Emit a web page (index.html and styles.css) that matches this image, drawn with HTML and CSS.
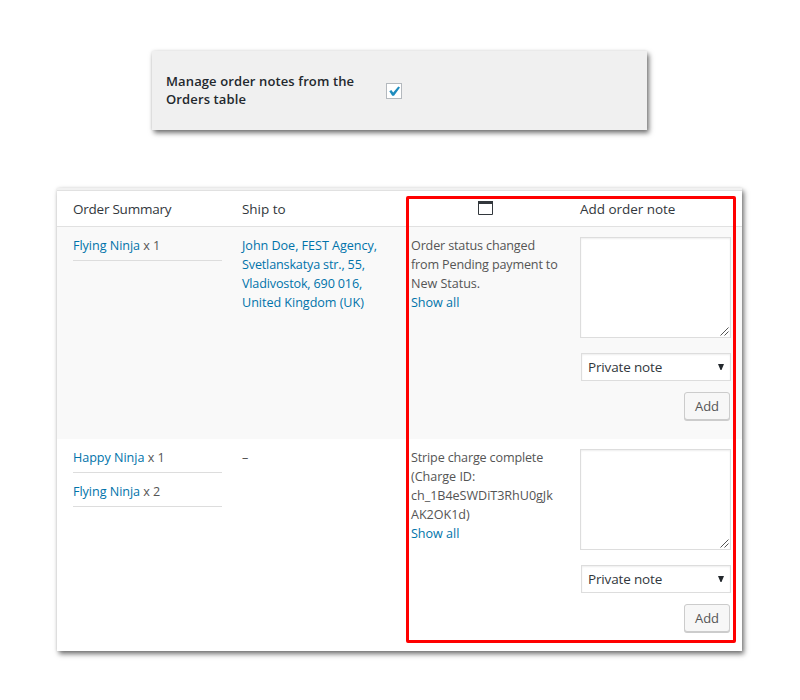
FILE: index.html
```html
<!DOCTYPE html>
<html lang="en">
<head>
<meta charset="utf-8">
<title>Order notes</title>
<link rel="stylesheet" href="styles.css">
</head>
<body>
<section class="option">
  <div class="option-label">Manage order notes from the<br>Orders table</div>
  <span class="check"><svg width="14" height="14" viewBox="0 0 14 14"><path d="M2.300 7.200 4.300 6 6.200 8.400 11.300 2.500 13 3.500 7 11.700 5.200 11.700Z" fill="#1e8cbe"/></svg></span>
</section>

<section class="orders">
  <div class="row head">
    <div class="cell tight">Order Summary</div>
    <div class="cell">Ship to</div>
    <div class="cell icon-cell"><svg width="15" height="14" viewBox="0 0 15 14"><path d="M.5 0V13.500H14.500V0" fill="#fff" stroke="#32373c"/><path d="M0 0H15V3H0Z" fill="#32373c"/></svg></div>
    <div class="cell">Add order note</div>
  </div>
  <div class="row odd">
    <div class="cell">
      <div class="item"><a>Flying Ninja</a> x 1</div>
    </div>
    <div class="cell"><a>John Doe, FEST Agency,<br><span class="tight">Svetlanskatya str., 55,</span><br><span class="tight">Vladivostok, 690 016,</span><br>United Kingdom (UK)</a></div>
    <div class="cell"><span class="tight">Order status changed</span><br><span class="tight">from Pending payment to</span><br>New Status.<br><a>Show all</a></div>
    <div class="cell form">
      <div class="textarea"><svg width="9" height="9" viewBox="0 0 9 9"><path d="M.5 8.500 8.500.5M4.500 8.500 8.500 4.500" stroke="#555" fill="none"/></svg></div>
      <div class="select"><span>Private note</span><svg width="6" height="6" viewBox="0 0 6 6"><path d="M0 0H6L3.500 6H2.500Z" fill="#23282d"/></svg></div>
      <div class="button">Add</div>
    </div>
  </div>
  <div class="row">
    <div class="cell">
      <div class="item"><a>Happy Ninja</a> x 1</div>
      <div class="item"><a>Flying Ninja</a> x 2</div>
    </div>
    <div class="cell">–</div>
    <div class="cell"><span class="tight">Stripe charge complete</span><br>(Charge ID:<br>ch_1B4eSWDiT3RhU0gJk<br>AK2OK1d)<br><a>Show all</a></div>
    <div class="cell form">
      <div class="textarea"><svg width="9" height="9" viewBox="0 0 9 9"><path d="M.5 8.500 8.500.5M4.500 8.500 8.500 4.500" stroke="#555" fill="none"/></svg></div>
      <div class="select"><span>Private note</span><svg width="6" height="6" viewBox="0 0 6 6"><path d="M0 0H6L3.500 6H2.500Z" fill="#23282d"/></svg></div>
      <div class="button">Add</div>
    </div>
  </div>
  <div class="highlight"></div>
</section>
</body>
</html>
```

FILE: styles.css
```css
* { box-sizing: border-box; }
body {
  margin: 0;
  padding-top: 51px;
  height: 700px;
  background: #fff;
  color: #555;
  font: 12.6px/19px "Open Sans", "Noto Sans", sans-serif;
}
svg { display: block; }
a { color: #0073aa; }
.option {
  display: flex;
  align-items: center;
  width: 495px;
  height: 79px;
  margin-left: 152px;
  padding: 0 14px;
  background: #f0f0f0;
  box-shadow: 2px 3px 5px rgba(0, 0, 0, .55), 0 0 3px rgba(0, 0, 0, .1);
}
.option-label {
  width: 220px;
  padding-bottom: 2px;
  color: #23282d;
  font-weight: 600;
  font-size: 13px;
  line-height: 18px;
  letter-spacing: .12px;
}
.check {
  width: 16px;
  height: 16px;
  border: 1px solid #b4b9be;
  background: #fff;
}
.orders {
  position: relative;
  width: 685px;
  height: 463px;
  margin: 58px 0 0 57px;
  padding-top: 2px;
  background: #f1f1f1;
  box-shadow: 2px 3px 5px rgba(0, 0, 0, .55), 0 0 3px rgba(0, 0, 0, .1);
}
.row {
  display: grid;
  grid-template-columns: repeat(4, 149px);
  column-gap: 20px;
  height: 212px;
  padding: 9px 0 0 16px;
  background: #fff;
}
.cell {
  white-space: nowrap;
  letter-spacing: -.04px;
}
.tight { letter-spacing: -.16px; }
.head {
  height: 37px;
  border-top: 1px solid #e1e1e1;
  border-bottom: 1px solid #e1e1e1;
  color: #32373c;
  font-size: 13.500px;
}
.head .tight { letter-spacing: -.24px; }
.odd { background: #f9f9f9; }
.icon-cell { padding: 1px 0 0 67px; }
.item {
  height: 25px;
  margin-bottom: 9px;
  border-bottom: 1px solid #ddd;
}
.form {
  display: flex;
  flex-direction: column;
  align-items: flex-end;
  width: 151px;
  padding-top: 1px;
}
.textarea {
  display: flex;
  align-items: flex-end;
  justify-content: flex-end;
  width: 151px;
  height: 101px;
  padding: 1px;
  border: 1px solid #ddd;
  background: #fff;
  box-shadow: inset 0 1px 2px rgba(0, 0, 0, .07);
}
.select {
  display: flex;
  align-items: center;
  justify-content: space-between;
  width: 150px;
  height: 28px;
  margin-top: 15px;
  padding: 0 6px;
  border: 1px solid #ddd;
  background: #fff;
  color: #32373c;
  font-size: 13.500px;
  letter-spacing: -.15px;
  box-shadow: inset 0 1px 2px rgba(0, 0, 0, .07);
}
.button {
  width: 46px;
  height: 28px;
  margin: 11px 1px 0 0;
  border: 1px solid #ccc;
  border-radius: 3px;
  background: #f7f7f7;
  box-shadow: 0 1px 0 #ccc;
  font-size: 13px;
  line-height: 27px;
  text-align: center;
}
.highlight {
  position: absolute;
  left: 349px;
  top: 8px;
  width: 330px;
  height: 447px;
  border: 3px solid #f00;
  border-radius: 2px;
}
```
